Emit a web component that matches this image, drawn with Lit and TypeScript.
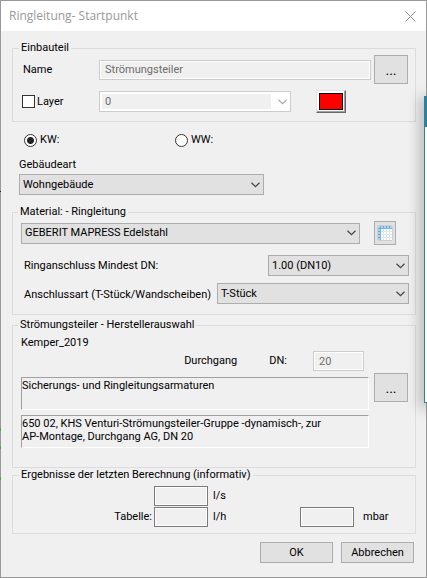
import { LitElement, html, css, svg } from "lit";
import { customElement, property, state } from "lit/decorators.js";

/** Drop-down with a flat Windows look. */
@customElement("combo-box")
export class ComboBox extends LitElement {
  @property() label = "";
  @property() value = "";
  @property({ type: Boolean }) disabled = false;

  static styles = css`
    :host {
      display: grid;
      height: 21px;
      min-width: 0;
    }
    select,
    svg {
      grid-area: 1 / 1;
    }
    select {
      appearance: none;
      box-sizing: border-box;
      width: 100%;
      height: 21px;
      margin: 0;
      padding: 0 20px 0 3px;
      border: 1px solid #adadad;
      border-radius: 0;
      background: #e1e1e1;
      color: #000;
      font: inherit;
    }
    select:disabled {
      padding-left: 5px;
      border-color: #ccc;
      background: linear-gradient(#f0f0f0, #f0f0f0) 2px 2px / calc(100% - 21px) calc(100% - 4px) no-repeat #fff;
      color: #6d6d6d;
      opacity: 1;
    }
    svg {
      justify-self: end;
      align-self: center;
      width: 9px;
      height: 6px;
      margin-right: 4px;
      pointer-events: none;
      fill: none;
      stroke: #444;
    }
    :host([disabled]) svg {
      stroke: #aaa;
    }
  `;

  render() {
    return html`
      <select aria-label=${this.label} ?disabled=${this.disabled}>
        <option>${this.value}</option>
      </select>
      <svg viewBox="0 0 9 6" aria-hidden="true">
        <path d="M.5 .8 4.5 4.6 8.5 .8" stroke-width="1.2" />
      </svg>
    `;
  }
}

@customElement("app-root")
export class AppRoot extends LitElement {
  @state() private water = "KW";

  static styles = css`
    :host {
      display: block;
      font: 11px/14px Roboto, sans-serif;
      color: #000;
    }
    .window {
      position: relative;
      box-sizing: border-box;
      min-height: 100vh;
      overflow: hidden;
      padding: 1px;
      background: linear-gradient(#f0f0f0, #f0f0f0) content-box, #999;
    }
    .titlebar {
      display: flex;
      align-items: center;
      justify-content: space-between;
      height: 30px;
      padding: 0 10px 0 8px;
      background: #fff;
      color: #999;
    }
    .title {
      margin: 0;
      font: 12px/16px "Open Sans", sans-serif;
    }
    .close {
      display: flex;
      padding: 0;
      border: 0;
      background: none;
    }
    .close svg {
      width: 11px;
      height: 11px;
      stroke: #8c8c8c;
    }
    form {
      padding: 10px 10px 14px 11px;
    }
    fieldset {
      min-width: 0;
      margin: 0;
      padding: 0 7px 8px 9px;
      border: 1px solid #dcdcdc;
    }
    legend {
      height: 14px;
      margin-left: -3px;
      padding: 0 2px;
      white-space: nowrap;
    }
    label,
    .text {
      white-space: nowrap;
    }
    .row {
      display: flex;
      align-items: center;
    }
    .grow {
      flex: 1;
    }
    .field {
      box-sizing: border-box;
      height: 20px;
      min-width: 0;
      margin: 0;
      padding: 0 5px;
      border: 1px solid #ccc;
      border-radius: 0;
      background: #f0f0f0;
      box-shadow: inset 0 0 0 1px #fff;
      color: #6d6d6d;
      font: inherit;
    }
    .result {
      width: 54px;
      border-color: #7a7a7a;
    }
    .small {
      width: 51px;
      margin-right: 44px;
    }
    .btn {
      box-sizing: border-box;
      height: 21px;
      padding: 0;
      border: 1px solid #adadad;
      background: #e1e1e1;
      color: #000;
      font: inherit;
    }
    .more {
      width: 34px;
      height: 29px;
      font-size: 14px;
    }
    .name-label {
      width: 77px;
      box-sizing: border-box;
      padding-left: 1px;
    }
    .layer-label {
      display: flex;
      align-items: center;
      gap: 2px;
      width: 77px;
    }
    .check,
    .radio {
      appearance: none;
      box-sizing: border-box;
      flex: none;
      width: 13px;
      height: 13px;
      margin: 0;
      border: 1px solid #333;
      background: #fff;
    }
    .check:checked {
      background: #333;
      box-shadow: inset 0 0 0 2px #fff;
    }
    .radio {
      border-radius: 50%;
    }
    .radio:checked {
      background: radial-gradient(circle, #222 3px, #fff 4px);
    }
    .name-row {
      gap: 3px;
    }
    .name-row .field {
      flex: 1;
    }
    .layer-row {
      margin-top: 6px;
    }
    .layer-row combo-box {
      flex: 0 1 192px;
    }
    .swatch {
      box-sizing: border-box;
      width: 30px;
      height: 23px;
      margin-left: 25px;
      padding: 2px;
      border: 1px solid;
      border-color: #e3e3e3 #696969 #696969 #e3e3e3;
      background: #fff;
      box-shadow: inset -1px -1px 0 #a0a0a0;
    }
    .swatch-fill {
      display: block;
      box-sizing: border-box;
      width: 24px;
      height: 17px;
      border: 1px solid #000;
      background: #f00;
    }
    .water {
      margin: 10px 0 0 12px;
      height: 16px;
    }
    .option {
      display: flex;
      align-items: center;
      gap: 3px;
      width: 151px;
    }
    .building {
      display: grid;
      grid-template-columns: minmax(0, 245px);
      gap: 2px;
      margin: 10px 0 10px 7px;
    }
    .stack {
      display: flex;
      flex-direction: column;
    }
    .material {
      gap: 10px;
      padding: 2px 0;
    }
    .material-row {
      gap: 14px;
    }
    .grid-btn {
      display: flex;
      align-items: center;
      justify-content: center;
      width: 22px;
      height: 24px;
      margin-right: 13px;
    }
    .grid-btn svg {
      width: 16px;
      height: 16px;
    }
    .pair {
      justify-content: space-between;
      padding-left: 3px;
    }
    .dn {
      width: 141px;
    }
    .kind {
      width: 192px;
      margin-top: -3px;
    }
    .group {
      margin-top: 3px;
    }
    .pipes {
      padding-left: 8px;
      padding-right: 6px;
    }
    .maker {
      padding: 4px 7px 19px 8px;
    }
    .maker-dn {
      justify-content: flex-end;
      margin-top: 1px;
    }
    .flow {
      margin-right: 32px;
    }
    .dn-label {
      margin-right: 26px;
    }
    .maker-body {
      gap: 5px;
      align-items: flex-start;
      margin-top: 2px;
    }
    .boxes {
      flex: 1;
      gap: 5px;
      min-width: 0;
      padding-top: 4px;
    }
    .sunken {
      box-sizing: border-box;
      height: 33px;
      margin: 0;
      padding-top: 1px;
      border: 1px solid;
      border-color: #a0a0a0 #fff #fff #a0a0a0;
      line-height: 13px;
    }
    .results {
      display: grid;
      grid-template-columns: 132px 54px minmax(0, 1fr) 54px 54px;
      align-items: center;
      gap: 1px 0;
      padding-top: 4px;
      padding-bottom: 6px;
    }
    .before {
      padding-right: 2px;
      text-align: right;
    }
    .after {
      padding-left: 5px;
    }
    .unit {
      padding-left: 9px;
    }
    .first {
      grid-column: 2;
    }
    .first-unit {
      grid-column: 3 / -1;
    }
    .actions {
      justify-content: flex-end;
      gap: 8px;
      margin: 8px 2px 0 0;
    }
    .action {
      width: 73px;
    }
    /* Edge of the neighbouring window that lies over this one. */
    .neighbour {
      position: absolute;
      top: 96px;
      right: 0;
      box-sizing: border-box;
      width: 3px;
      height: 307px;
      border: 1px solid #2a829d;
      border-top-width: 31px;
      border-right: 0;
      background: #fff;
      box-shadow: 0 3px 14px 2px rgba(0, 0, 0, 0.4);
    }
    /* Drawing lines that end at the left edge of the dialog. */
    .mark {
      position: absolute;
      left: 0;
      width: 1px;
      height: 3px;
      background: #2fb52f;
    }
    .mark-a {
      top: 191px;
      height: 1px;
      background: #222;
    }
    .mark-b {
      top: 428px;
    }
    .mark-c {
      top: 446px;
    }
    .mark-d {
      top: 477px;
    }
  `;

  private pick(e: Event) {
    this.water = (e.target as HTMLInputElement).value;
  }

  private option(name: string) {
    return html`<label class="option">
      <input class="radio" type="radio" name="water" .value=${name} .checked=${this.water === name} @change=${this.pick} />${name}:
    </label>`;
  }

  private tableIcon() {
    const lines = [6, 9, 12].map(
      (p) => svg`<path d="M${p}.5 4V15M4 ${p}.5H15" stroke="#dde6ee" />`,
    );
    const ticks = [3, 6, 9, 12].map(
      (p) => svg`<path d="M${p}.5 1V4M1 ${p}.5H4" stroke="#6aa8d8" />`,
    );
    return html`<svg viewBox="0 0 16 16" aria-hidden="true">
      <rect x=".5" y=".5" width="15" height="15" rx="1" fill="#fff" stroke="#c6ced6" />
      <path d="M1 1H15V4H4V15H1Z" fill="#a6d3f5" />
      ${lines}${ticks}
      <path d="M4 3.5H15M3.5 4V15" stroke="#83b4da" fill="none" />
    </svg>`;
  }

  render() {
    return html`
      <main class="window">
        <header class="titlebar">
          <h1 class="title">Ringleitung- Startpunkt</h1>
          <button class="close" aria-label="Schließen">
            <svg viewBox="0 0 11 11"><path d="M.5 .5 10.5 10.5M10.5 .5 .5 10.5" /></svg>
          </button>
        </header>
        <form @submit=${(e: Event) => e.preventDefault()}>
          <fieldset>
            <legend>Einbauteil</legend>
            <div class="row name-row">
              <div class="row grow">
                <label class="name-label" for="name">Name</label>
                <input class="field" id="name" value="Strömungsteiler" disabled />
              </div>
              <button type="button" class="btn more" aria-label="Einbauteil wählen">...</button>
            </div>
            <div class="row layer-row">
              <label class="layer-label"><input class="check" type="checkbox" />Layer</label>
              <combo-box label="Layer" value="0" disabled></combo-box>
              <button type="button" class="swatch" aria-label="Farbe"><span class="swatch-fill"></span></button>
            </div>
          </fieldset>

          <div class="row water">${this.option("KW")}${this.option("WW")}</div>

          <div class="building">
            <span class="text">Gebäudeart</span>
            <combo-box label="Gebäudeart" value="Wohngebäude"></combo-box>
          </div>

          <fieldset class="pipes">
            <legend>Material: - Ringleitung</legend>
            <div class="stack material">
              <div class="row material-row">
                <combo-box class="grow" label="Material" value="GEBERIT MAPRESS Edelstahl"></combo-box>
                <button type="button" class="btn grid-btn" aria-label="Tabelle">${this.tableIcon()}</button>
              </div>
              <div class="row pair">
                <span class="text">Ringanschluss Mindest DN:</span>
                <combo-box class="dn" label="Ringanschluss Mindest DN" value="1.00 (DN10)"></combo-box>
              </div>
              <div class="row pair">
                <span class="text">Anschlussart (T-Stück/Wandscheiben)</span>
                <combo-box class="kind" label="Anschlussart" value="T-Stück"></combo-box>
              </div>
            </div>
          </fieldset>

          <fieldset class="group maker">
            <legend>Strömungsteiler - Herstellerauswahl</legend>
            <div class="text">Kemper_2019</div>
            <div class="row maker-dn">
              <span class="flow">Durchgang</span>
              <label class="dn-label" for="dn">DN:</label>
              <input class="field small" id="dn" value="20" disabled />
            </div>
            <div class="row maker-body">
              <div class="stack boxes">
                <p class="sunken">Sicherungs- und Ringleitungsarmaturen</p>
                <p class="sunken">
                  650 02, KHS Venturi-Strömungsteiler-Gruppe -dynamisch-, zur<br />AP-Montage, Durchgang AG, DN 20
                </p>
              </div>
              <button type="button" class="btn more" aria-label="Armatur wählen">...</button>
            </div>
          </fieldset>

          <fieldset class="results">
            <legend>Ergebnisse der letzten Berechnung (informativ)</legend>
            <input class="field result first" id="ls" readonly />
            <label class="after first-unit" for="ls">l/s</label>
            <label class="before" for="lh">Tabelle:</label>
            <input class="field result" id="lh" readonly />
            <label class="after" for="lh">l/h</label>
            <input class="field result" id="mbar" readonly />
            <label class="unit" for="mbar">mbar</label>
          </fieldset>

          <div class="row actions">
            <button class="btn action">OK</button>
            <button type="button" class="btn action">Abbrechen</button>
          </div>
        </form>
        <div class="neighbour"></div>
        <span class="mark mark-a"></span>
        <span class="mark mark-b"></span>
        <span class="mark mark-c"></span>
        <span class="mark mark-d"></span>
      </main>
    `;
  }
}
